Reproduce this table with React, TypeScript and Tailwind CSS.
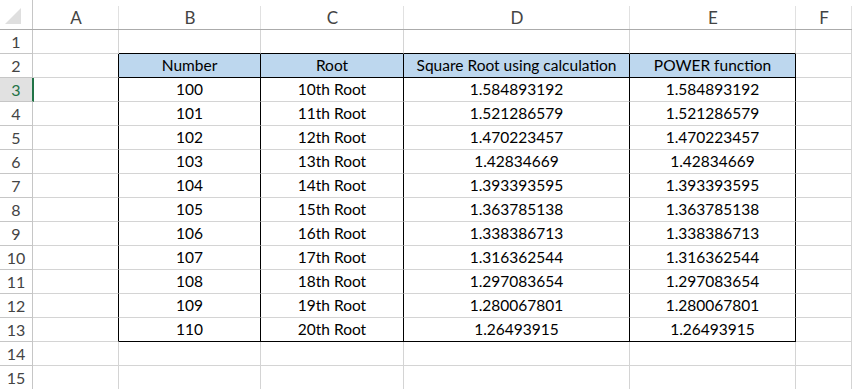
import React from "react";

const rows = [
  ["100", "10th Root", "1.584893192"],
  ["101", "11th Root", "1.521286579"],
  ["102", "12th Root", "1.470223457"],
  ["103", "13th Root", "1.42834669"],
  ["104", "14th Root", "1.393393595"],
  ["105", "15th Root", "1.363785138"],
  ["106", "16th Root", "1.338386713"],
  ["107", "17th Root", "1.316362544"],
  ["108", "18th Root", "1.297083654"],
  ["109", "19th Root", "1.280067801"],
  ["110", "20th Root", "1.26493915"],
];

const letters = ["A", "B", "C", "D", "E", "F"];

const RowHead = ({ n, active }: { n: number; active?: boolean }) =>
  active ? (
    <div className="h-6 flex items-center justify-center bg-[#e1e1e1] text-[#217346] text-[16px] border-b border-b-[#c6c6c6] border-r-2 border-r-[#217346] w-[34px] -mr-px z-10 relative">
      {n}
    </div>
  ) : (
    <div className="h-6 flex items-center justify-center text-[#444] text-[16px] border-b border-r border-[#c6c6c6]">
      {n}
    </div>
  );

const Cell = ({
  children,
  className = "",
}: {
  children?: React.ReactNode;
  className?: string;
}) => (
  <div
    className={`h-6 flex items-center justify-center border-b border-r border-[#d4d4d4] text-black ${className}`}
  >
    {children}
  </div>
);

export default function App() {
  return (
    <div
      className="w-[852px] h-[389px] bg-white overflow-hidden text-[15.5px]"
      style={{ fontFamily: "Lato, 'Open Sans', sans-serif" }}
    >
      <div className="grid grid-cols-[33px_86px_142px_143px_226px_166px_1fr]">
        {/* column headers */}
        <div className="h-[30px] border-b border-[#ababab] flex items-center justify-center pt-[4px] relative">
          <svg width="17" height="17" viewBox="0 0 17 17" className="ml-[-6px]">
            <polygon points="0,16 16,0 16,16" fill="#dfdfdf" />
          </svg>
          <div className="absolute right-0 top-0 bottom-0 w-px bg-[#c6c6c6]" />
        </div>
        {letters.map((l) => (
          <div
            key={l}
            className="h-[30px] border-b border-[#ababab] flex items-center justify-center pt-[6px] text-[#444] text-[17px] relative"
          >
            {l}
            <div className="absolute right-0 top-[6px] bottom-0 w-px bg-[#e1e1e1]" />
          </div>
        ))}

        {/* row 1 */}
        <RowHead n={1} />
        <Cell />
        <Cell className="border-b-black" />
        <Cell className="border-b-black" />
        <Cell className="border-b-black" />
        <Cell className="border-b-black" />
        <Cell />

        {/* row 2 - table header */}
        <RowHead n={2} />
        <Cell className="border-r-black" />
        <Cell className="bg-[#bdd7ee] border-black">Number</Cell>
        <Cell className="bg-[#bdd7ee] border-black">Root</Cell>
        <Cell className="bg-[#bdd7ee] border-black">Square Root using calculation</Cell>
        <Cell className="bg-[#bdd7ee] border-black">POWER function</Cell>
        <Cell />

        {rows.map((r, i) => (
          <React.Fragment key={r[0]}>
            <RowHead n={i + 3} active={i === 0} />
            <Cell className="border-r-black" />
            <Cell className={`border-r-black ${i === rows.length - 1 ? "border-b-black" : ""}`}>
              {r[0]}
            </Cell>
            <Cell className={`border-r-black ${i === rows.length - 1 ? "border-b-black" : ""}`}>
              {r[1]}
            </Cell>
            <Cell className={`border-r-black ${i === rows.length - 1 ? "border-b-black" : ""}`}>
              {r[2]}
            </Cell>
            <Cell className={`border-r-black ${i === rows.length - 1 ? "border-b-black" : ""}`}>
              {r[2]}
            </Cell>
            <Cell />
          </React.Fragment>
        ))}

        <RowHead n={14} />
        <Cell />
        <Cell />
        <Cell />
        <Cell />
        <Cell />
        <Cell />
        <RowHead n={15} />
        <Cell />
        <Cell />
        <Cell />
        <Cell />
        <Cell />
        <Cell />
      </div>
    </div>
  );
}
